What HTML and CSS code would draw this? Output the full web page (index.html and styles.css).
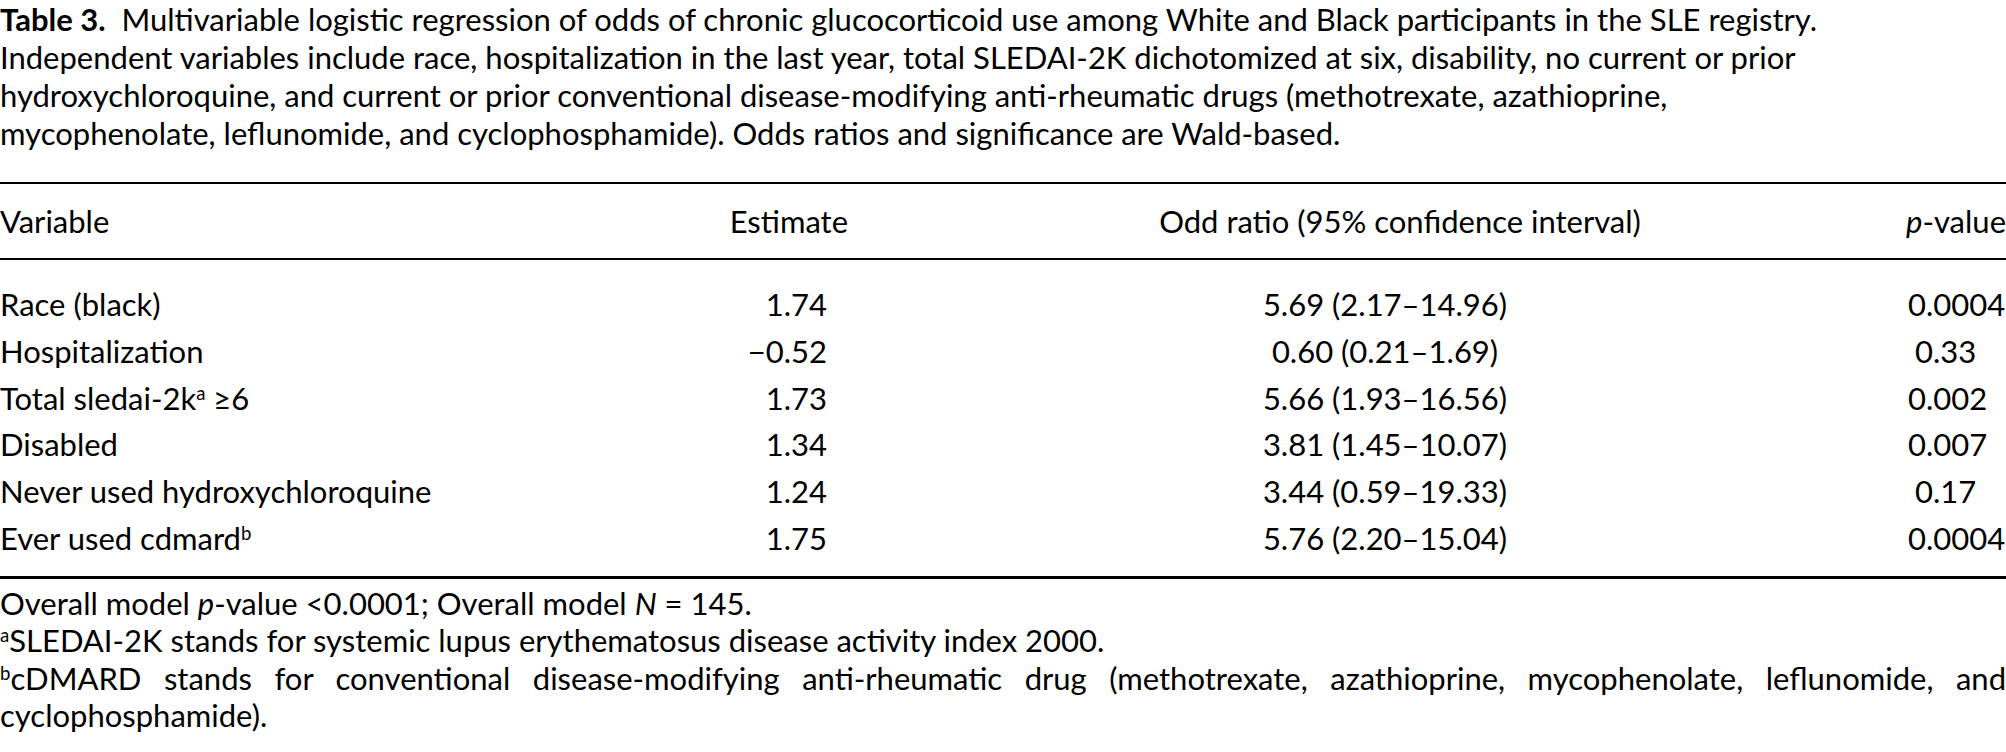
FILE: index.html
```html
<!DOCTYPE html>
<html lang="en">
<head>
<meta charset="utf-8">
<title>Table 3</title>
<link rel="stylesheet" href="styles.css">
</head>
<body>
<div class="page">
  <p class="caption"><b>Table 3.</b>&nbsp; Multivariable logistic regression of odds of chronic glucocorticoid use among White and Black participants in the SLE registry.<br>Independent variables include race, hospitalization in the last year, total SLEDAI-2K dichotomized at six, disability, no current or prior<br>hydroxychloroquine, and current or prior conventional disease-modifying anti-rheumatic drugs (methotrexate, azathioprine,<br>mycophenolate, leflunomide, and cyclophosphamide). Odds ratios and significance are Wald-based.</p>

  <div class="table">
    <div class="row head">
      <div class="c1">Variable</div>
      <div class="c2">Estimate</div>
      <div class="c3">Odd ratio (95% confidence interval)</div>
      <div class="c4"><i>p</i>-value</div>
    </div>
    <div class="tbody">
      <div class="row">
        <div class="c1">Race (black)</div>
        <div class="c2">1.74</div>
        <div class="c3">5.69 (2.17–14.96)</div>
        <div class="c4">0.0004</div>
      </div>
      <div class="row">
        <div class="c1">Hospitalization</div>
        <div class="c2">−0.52</div>
        <div class="c3">0.60 (0.21–1.69)</div>
        <div class="c4 indent">0.33</div>
      </div>
      <div class="row">
        <div class="c1">Total sledai-2k<sup>a</sup> ≥6</div>
        <div class="c2">1.73</div>
        <div class="c3">5.66 (1.93–16.56)</div>
        <div class="c4">0.002</div>
      </div>
      <div class="row">
        <div class="c1">Disabled</div>
        <div class="c2">1.34</div>
        <div class="c3">3.81 (1.45–10.07)</div>
        <div class="c4">0.007</div>
      </div>
      <div class="row">
        <div class="c1">Never used hydroxychloroquine</div>
        <div class="c2">1.24</div>
        <div class="c3">3.44 (0.59–19.33)</div>
        <div class="c4 indent">0.17</div>
      </div>
      <div class="row">
        <div class="c1">Ever used cdmard<sup>b</sup></div>
        <div class="c2">1.75</div>
        <div class="c3">5.76 (2.20–15.04)</div>
        <div class="c4">0.0004</div>
      </div>
    </div>
  </div>

  <div class="notes">
    <p class="note">Overall model <i>p</i>-value &lt;0.0001; Overall model <i>N</i> = 145.</p>
    <p class="note"><sup>a</sup>SLEDAI-2K stands for systemic lupus erythematosus disease activity index 2000.</p>
    <p class="note"><span class="just"><sup>b</sup>cDMARD stands for conventional disease-modifying anti-rheumatic drug (methotrexate, azathioprine, mycophenolate, leflunomide, and</span>cyclophosphamide).</p>
  </div>
</div>
</body>
</html>
```
FILE: styles.css
```css
html, body {
  margin: 0;
  padding: 0;
  background: #ffffff;
}

body {
  font-family: "Lato", "Open Sans", "Liberation Sans", sans-serif;
  font-size: 31px;
  color: #000000;
}

.page {
  width: 2006px;
}

.caption {
  margin: 0;
  line-height: 38px;
  white-space: nowrap;
}

.caption b {
  font-weight: 700;
}

.table {
  margin-top: 30px;
  border-top: 2px solid #000;
  border-bottom: 3px solid #000;
}

.row {
  display: grid;
  grid-template-columns: 660px 240px 980px 1fr;
  line-height: 46.8px;
  white-space: nowrap;
}

.head {
  line-height: 74px;
  border-bottom: 2px solid #000;
}

.tbody {
  padding: 21px 0 14px;
}

.c2 {
  text-align: right;
  padding-right: 73px;
}

.head .c2 {
  padding-right: 52px;
}

.c3 {
  text-align: center;
  padding-right: 10px;
}

.head .c3 {
  padding-right: 0;
  padding-left: 20px;
}

.c4 {
  padding-left: 28px;
}

.c4.indent {
  padding-left: 35px;
}

.head .c4 {
  padding-left: 0;
  text-align: right;
}

sup {
  font-size: 0.6em;
  line-height: 0;
  vertical-align: 0.55em;
}

.notes {
  margin-top: 6px;
  line-height: 37.5px;
}

.note {
  margin: 0;
}

.just {
  display: block;
  text-align: justify;
  text-align-last: justify;
}
```
